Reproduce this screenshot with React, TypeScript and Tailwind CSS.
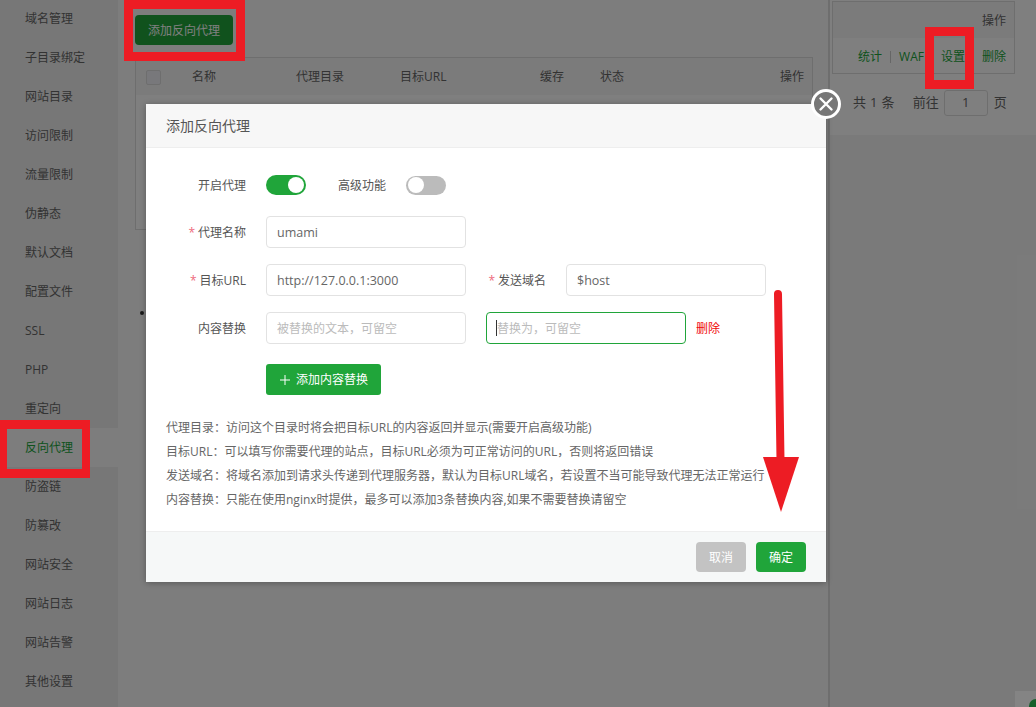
import React from "react";

const menu = ["域名管理","子目录绑定","网站目录","访问限制","流量限制","伪静态","默认文档","配置文件","SSL","PHP","重定向","反向代理","防盗链","防篡改","网站安全","网站日志","网站告警","其他设置"];
const help = [
  "代理目录：访问这个目录时将会把目标URL的内容返回并显示(需要开启高级功能)",
  "目标URL：可以填写你需要代理的站点，目标URL必须为可正常访问的URL，否则将返回错误",
  "发送域名：将域名添加到请求头传递到代理服务器，默认为目标URL域名，若设置不当可能导致代理无法正常运行",
  "内容替换：只能在使用nginx时提供，最多可以添加3条替换内容,如果不需要替换请留空",
];

function Label({ text, req, w = "w-[80px]" }: { text: string; req?: boolean; w?: string }) {
  return (
    <label className={`${w} shrink-0 pt-[2px] text-right text-[12px] text-[#555]`}>
      {req && <span className="mr-[3px] text-[#ee6a7c]">*</span>}
      {text}
    </label>
  );
}

function Field({ value, placeholder, focused }: { value?: string; placeholder?: string; focused?: boolean }) {
  return (
    <div className="relative w-[200px] shrink-0">
      <input
        readOnly
        defaultValue={value}
        placeholder={placeholder}
        className={`block h-[32px] w-full rounded-[4px] border bg-white pl-[10px] pt-[1px] text-[12.5px] text-[#666] outline-none placeholder:text-[12px] placeholder:text-[#bbb] ${focused ? "border-[#20a53a]" : "border-[#e2e2e2]"}`}
      />
      {focused && <span className="absolute left-[10px] top-[8px] h-[16px] w-px bg-[#333]" />}
    </div>
  );
}

export default function App() {
  return (
    <div className="relative flex h-[707px] w-[1036px] overflow-hidden bg-[#f5f5f5] font-['Open_Sans','Noto_Sans_CJK_SC',sans-serif] text-[12px] text-[#666]">
      {/* sidebar */}
      <aside className="w-[118px] shrink-0 bg-[#eee]">
        <ul className="-mt-[1px]">
          {menu.map((m) => (
            <li key={m} className={`flex h-[39px] items-center pl-[25px] ${m === "反向代理" ? "bg-[#fafafa] text-[#20a53a]" : "text-[#666]"}`}>{m}</li>
          ))}
        </ul>
      </aside>

      {/* middle content */}
      <main className="flex w-[712px] shrink-0 flex-col border-r-2 border-[#ddd] bg-[#fafafa] pl-[17px] pr-[17px] pt-[15px]">
        <button className="h-[30px] w-[98px] rounded-[4px] bg-[#20a53a] pt-[1px] text-[12px] text-white">添加反向代理</button>
        <div className="mt-[12px] h-[173px] w-[678px] border border-[#ddd] bg-white">
          <div className="flex h-[37px] items-center bg-[#f7f7f7] pt-[1px] text-[#666]">
            <div className="w-[56px] pl-[10px]"><span className="block h-[15px] w-[15px] rounded-[2px] border border-[#ddd] bg-[#f0f0f6]" /></div>
            <div className="w-[104px]">名称</div>
            <div className="w-[104px]">代理目录</div>
            <div className="w-[140px]">目标URL</div>
            <div className="w-[60px]">缓存</div>
            <div className="flex-1">状态</div>
            <div className="pr-[8px]">操作</div>
          </div>
        </div>
        <div className="ml-[5px] mt-[81px] h-[4px] w-[4px] rounded-full bg-[#333]" />
      </main>

      {/* right column */}
      <section className="flex-1">
        <div className="h-[135px] bg-white pl-[2px] pr-[21px] pt-px">
          <div className="h-[73px] w-[183px] border border-[#ddd]">
            <div className="flex h-[36px] items-center justify-end bg-[#f7f7f7] pr-[8px] pt-[1px]">操作</div>
            <div className="flex h-[36px] items-center justify-end pr-[8px] pt-[1px] text-[#20a53a]">
              <span>统计</span>
              <span className="mx-[8px] h-[12px] w-px bg-[#ccc]" />
              <span>WAF</span>
              <span className="mx-[8px] h-[12px] w-px bg-[#ccc]" />
              <span>设置</span>
              <span className="mx-[8px] h-[12px] w-px bg-transparent" />
              <span>删除</span>
            </div>
          </div>
          <div className="mt-[16px] flex items-center pl-[21px] text-[13px] text-[#666]">
            <span className="tracking-[0.3px]">共 1 条</span>
            <span className="ml-[18px]">前往</span>
            <span className="ml-[5px] flex h-[26px] w-[44px] items-center justify-center rounded-[3px] border border-[#ddd]">1</span>
            <span className="ml-[6px]">页</span>
          </div>
        </div>
      </section>

      {/* dim layer */}
      <div className="absolute inset-0 bg-black/50" />

      {/* floating chip bottom right */}
      <div className="absolute bottom-0 right-0 h-[16px] w-[21px] overflow-hidden bg-[#848484]">
        <span className="absolute left-[14px] top-[8px] h-[14px] w-[14px] rounded-full bg-[#14602a]" />
      </div>

      {/* modal */}
      <div className="absolute left-[146px] top-[104px] flex h-[478px] w-[680px] flex-col rounded-[2px] bg-white shadow-[0_1px_6px_rgba(0,0,0,0.3)]">
        <header className="flex h-[44px] shrink-0 items-center border-b border-[#eee] bg-[#f7f7f7] pl-[20px] text-[14px] text-[#555]">添加反向代理</header>

        <div className="flex-1 pl-[20px]">
          <div className="mt-[27px] flex h-[20px] items-center">
            <Label text="开启代理" />
            <span className="ml-[20px] flex h-[20px] w-[40px] items-center justify-end rounded-full bg-[#20a53a] pr-[2px]">
              <span className="h-[16px] w-[16px] rounded-full bg-white" />
            </span>
            <span className="ml-[32px] pt-[2px] text-[#555]">高级功能</span>
            <span className="ml-[20px] flex h-[19px] w-[40px] items-center rounded-full bg-[#bbb] pl-[2px]">
              <span className="h-[16px] w-[16px] rounded-full bg-white" />
            </span>
          </div>

          <div className="mt-[21px] flex items-center">
            <Label text="代理名称" req />
            <div className="ml-[20px]"><Field value="umami" /></div>
          </div>

          <div className="mt-[16px] flex items-center">
            <Label text="目标URL" req />
            <div className="ml-[20px]"><Field value="http://127.0.0.1:3000" /></div>
            <Label text="发送域名" req />
            <div className="ml-[20px]"><Field value="$host" /></div>
          </div>

          <div className="mt-[16px] flex items-center">
            <Label text="内容替换" />
            <div className="ml-[20px]"><Field placeholder="被替换的文本，可留空" /></div>
            <div className="ml-[20px]"><Field placeholder="替换为，可留空" focused /></div>
            <span className="ml-[10px] pt-[2px] text-[#ef0808]">删除</span>
          </div>

          <button className="ml-[100px] mt-[20px] flex h-[31px] w-[115px] items-center justify-center gap-[5px] rounded-[3px] bg-[#20a53a] text-[12px] text-white">
            <svg width="12" height="12" viewBox="0 0 12 12" fill="none" stroke="currentColor" strokeWidth="1"><path d="M6 1v10M1 6h10" /></svg>
            添加内容替换
          </button>

          <ul className="mt-[21px] text-[12px] leading-[24px] text-[#666]">
            {help.map((h) => <li key={h} className="whitespace-nowrap">{h}</li>)}
          </ul>
        </div>

        <footer className="flex h-[51px] shrink-0 items-center justify-end gap-[10px] border-t border-[#eee] bg-[#f6f8f8] pr-[20px]">
          <button className="h-[30px] w-[50px] rounded-[4px] bg-[#c3c3c3] pt-[1px] text-[12px] text-white">取消</button>
          <button className="h-[30px] w-[50px] rounded-[4px] bg-[#20a53a] pt-[1px] text-[12px] text-white">确定</button>
        </footer>

        {/* close */}
        <svg className="absolute right-[-15px] top-[-15px]" width="30" height="30" viewBox="0 0 30 30">
          <circle cx="15" cy="15" r="13.5" fill="#777" stroke="#fff" strokeWidth="3" />
          <path d="M9.5 9.5l11 11M20.5 9.5l-11 11" stroke="#fff" strokeWidth="2.4" strokeLinecap="round" />
        </svg>
      </div>

      {/* annotations */}
      <div className="absolute left-[124px] top-0 h-[61px] w-[121px] border-[9px] border-[#ed1c24]" />
      <div className="absolute left-[925px] top-[27px] h-[62px] w-[49px] border-[9px] border-[#ed1c24]" />
      <div className="absolute left-0 top-[420px] h-[58px] w-[90px] border-x-[8px] border-y-[9px] border-[#ed1c24] border-l-[7px]" />
      <svg className="absolute left-[755px] top-[285px]" width="50" height="232" viewBox="0 0 50 232">
        <path d="M23 9L25.5 175" stroke="#ed1c24" strokeWidth="8" strokeLinecap="round" />
        <path d="M8 172H44L26 227Z" fill="#ed1c24" />
      </svg>
    </div>
  );
}
